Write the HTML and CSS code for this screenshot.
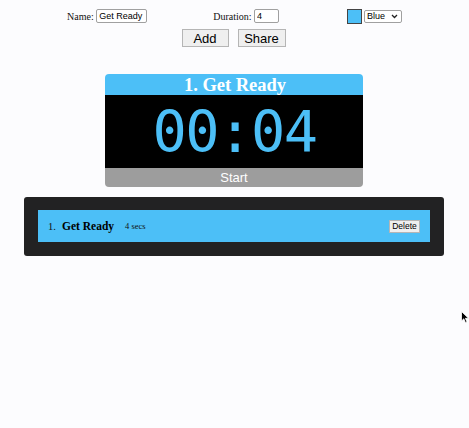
FILE: index.html
```html
<!DOCTYPE html>
<html>
<head>
<meta charset="utf-8">
<link rel="stylesheet" href="styles.css">
</head>
<body>
<div class="form-row">
  <label class="field">Name: <input class="txt name" type="text" value="Get Ready"></label>
  <label class="field">Duration: <input class="txt dur" type="text" value="4"></label>
  <div class="field color-field">
    <span class="swatch"></span>
    <span class="sel-wrap">
      <select class="sel"><option>Blue</option></select>
      <svg class="chev" width="7" height="5" viewBox="0 0 7 5"><path d="M1 1 L3.5 3.5 L6 1" fill="none" stroke="#222" stroke-width="1.3"/></svg>
    </span>
  </div>
</div>
<div class="btn-row">
  <button class="btn">Add</button>
  <button class="btn">Share</button>
</div>

<div class="timer">
  <div class="timer-title">1. Get Ready</div>
  <div class="timer-clock">00:04</div>
  <div class="timer-start">Start</div>
</div>

<div class="list">
  <div class="item">
    <span class="num">1.</span>
    <span class="iname">Get Ready</span>
    <span class="secs">4 secs</span>
    <button class="del">Delete</button>
  </div>
</div>

<svg class="cursor" width="8" height="13" viewBox="0 0 8 13"><path d="M0.5 0.5 L0.5 10 L2.8 7.8 L4.5 11.8 L6 11.1 L4.4 7.3 L7.5 7.3 Z" fill="#000" stroke="#fff" stroke-width="0.8"/></svg>
</body>
</html>
```

FILE: styles.css
```css
html, body {
  margin: 0;
  padding: 0;
  background: #fcfcfe;
}
body {
  position: relative;
  width: 469px;
  height: 428px;
  overflow: hidden;
  font-family: "Liberation Serif", "Times New Roman", serif;
}
.form-row {
  display: flex;
  justify-content: flex-start;
  align-items: center;
  gap: 66px;
  padding-top: 8px;
  height: 16px;
  padding-left: 67px;
}
.field {
  display: flex;
  align-items: center;
  font-size: 10px;
  color: #111;
  white-space: pre;
}
.color-field {
  margin-left: 2px;
}
.txt {
  font-family: "Liberation Sans", Arial, sans-serif;
  font-size: 9px;
  height: 14px;
  box-sizing: border-box;
  border: 1px solid #a0a0a0;
  border-radius: 2px;
  padding: 0 2px;
  margin: 0;
  background: #fff;
  color: #000;
}
.name { width: 51px; }
.dur { width: 25px; }
.swatch {
  width: 15px;
  height: 15px;
  box-sizing: border-box;
  border: 1px solid #444;
  background: #4cbff7;
  margin-right: 2px;
}
.sel-wrap {
  position: relative;
  display: inline-flex;
}
.sel {
  -webkit-appearance: none;
  appearance: none;
  font-family: "Liberation Sans", Arial, sans-serif;
  font-size: 9px;
  width: 38px;
  height: 13px;
  padding: 0 0 0 2px;
  border: 1px solid #a0a0a0;
  border-radius: 2px;
  background: #fff;
  color: #000;
}
.chev {
  position: absolute;
  right: 4px;
  top: 4px;
  pointer-events: none;
}
.btn-row {
  display: flex;
  justify-content: center;
  gap: 9px;
  margin-top: 5px;
  padding-right: 2px;
}
.btn {
  font-family: "Liberation Sans", Arial, sans-serif;
  font-size: 13px;
  height: 18px;
  padding: 0;
  border: 1px solid #b5b5b5;
  background: #efefef;
  color: #000;
  border-radius: 0;
}
.btn:first-child { width: 47px; }
.btn:last-child { width: 48px; }

.timer {
  width: 258px;
  margin: 27px 0 0 105px;
  border-radius: 4px;
  overflow: hidden;
}
.timer-title {
  background: #4cbff7;
  color: #fff;
  font-weight: bold;
  font-size: 18.5px;
  height: 21px;
  line-height: 22px;
  text-align: center;
  padding-left: 2px;
}
.timer-clock {
  background: #000;
  color: #4cbff7;
  font-family: "DejaVu Sans Mono", monospace;
  font-size: 57px;
  letter-spacing: -1.5px;
  height: 73px;
  line-height: 75px;
  text-align: center;
  padding-left: 1px;
}
.timer-start {
  background: #9d9d9d;
  color: #fff;
  font-family: "Liberation Sans", Arial, sans-serif;
  font-size: 13px;
  height: 19px;
  line-height: 19px;
  text-align: center;
}

.list {
  width: 392px;
  margin: 10px 0 0 24px;
  padding: 13px 14px 14px 14px;
  background: #222223;
  border-radius: 3px;
}
.item {
  display: flex;
  align-items: center;
  height: 32px;
  background: #4cbff7;
  padding: 0 10px 0 10px;
}
.num {
  font-size: 10.5px;
  color: #111;
  width: 14px;
}
.iname {
  font-size: 11.5px;
  font-weight: bold;
  color: #000;
  margin-right: 11px;
}
.secs {
  font-size: 8.5px;
  color: #111;
}
.del {
  margin-left: auto;
  font-family: "Liberation Sans", Arial, sans-serif;
  font-size: 8.5px;
  height: 13px;
  width: 31px;
  padding: 0;
  border: 1px solid #b5b5b5;
  background: #efefef;
  color: #000;
  border-radius: 0;
}
.cursor {
  position: absolute;
  left: 461px;
  top: 311px;
}
```
